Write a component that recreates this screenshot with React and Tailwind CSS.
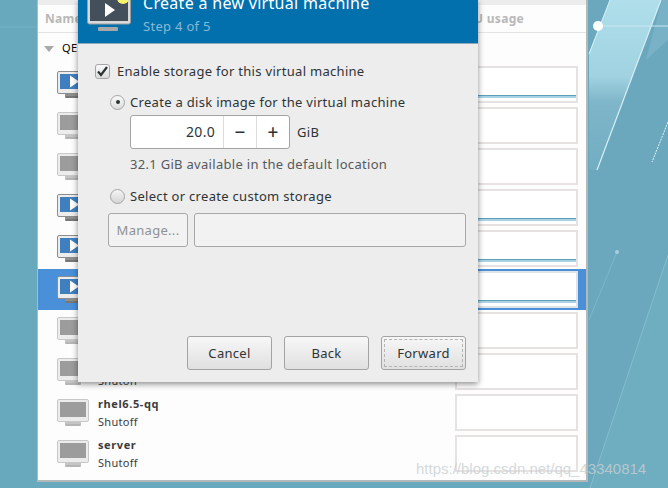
const font = { fontFamily: '"Noto Sans", sans-serif', letterSpacing: '0.3px' };

function Monitor({ on }) {
  return (
    <svg width="33" height="28" viewBox="0 0 33 28" className="shrink-0">
      <rect x="8" y="23" width="16" height="2.5" fill={on ? '#8f8f8f' : '#c4c4c4'} />
      <rect x="8" y="25" width="16" height="2" rx="1" fill={on ? '#777' : '#b5b5b5'} />
      <rect x="0.5" y="0.5" width="31" height="22" rx="1.5" fill="#ececec" stroke={on ? '#8d8d8d' : '#c8c8c8'} />
      <rect x="3" y="3" width="26" height="15" fill={on ? '#3f7fbf' : '#9c9c9c'} />
      {on && <polygon points="13,4.5 13,16.5 22,10.5" fill="#fff" />}
    </svg>
  );
}

const rows = [
  { on: true }, { on: false }, { on: false }, { on: true }, { on: true },
  { on: true, sel: true }, { on: false }, { on: false, status: 'Shutoff' },
  { on: false, name: 'rhel6.5-qq', status: 'Shutoff' },
  { on: false, name: 'server', status: 'Shutoff' },
];

function Row({ on, sel, name, status }) {
  return (
    <div className={`flex h-[41px] items-center ${sel ? 'bg-[#4a90d9]' : ''}`}>
      <div className="ml-[19px] w-[41px]"><Monitor on={on} /></div>
      <div className="flex w-[120px] flex-col text-[#3c3c3c]">
        {name && <span className="text-[11px] leading-[18px] font-bold tracking-[0.6px]">{name}</span>}
        {status && <span className={`text-[11px] leading-[17px] ${name ? '' : 'mt-[18px]'}`}>{status}</span>}
      </div>
      <div className={`relative ml-auto mr-[8px] h-[37px] w-[123px] border-2 bg-white ${sel ? 'border-[#dfe3e8]' : 'border-[#e6e2e2]'}`}>
        {on && <div className="absolute right-0 bottom-[3px] left-0 h-[3px] border-t border-[#5f9fb9] bg-[#a9d3e4]" />}
      </div>
    </div>
  );
}

function Btn({ children, focus }) {
  return (
    <div className="relative flex h-[34px] w-[85px] items-center justify-center rounded-[3px] border border-[#a3a3a3] bg-gradient-to-b from-[#f7f7f7] to-[#e0e0e0] text-[13px] text-[#2e3436]">
      {focus && <div className="absolute inset-[2px] border border-dashed border-[#b4b4b4]" />}
      {children}
    </div>
  );
}

export default function App() {
  return (
    <div style={font} className="relative h-[488px] w-[668px] overflow-hidden bg-[#69a9bd]">
      <svg width="668" height="488" className="absolute inset-0">
        <defs>
          <linearGradient id="glow" x1="0" y1="0" x2="0" y2="1">
            <stop offset="0" stopColor="#b0dfeb" />
            <stop offset="0.45" stopColor="#a0d2e1" />
            <stop offset="0.6" stopColor="#7fb6c9" />
            <stop offset="1" stopColor="#72adc2" />
          </linearGradient>
        </defs>
        <polygon points="588,0 668,0 668,488 588,488" fill="#6ba8be" />
        <polygon points="662,0 668,0 668,40 646,60" fill="#79b2c6" />
        <polygon points="589,53 610,0 661,0 597,170 589,170" fill="url(#glow)" />
        <line x1="589" y1="54" x2="610" y2="0" stroke="#d5f0f6" strokeWidth="1" />
        <line x1="661" y1="0" x2="597" y2="170" stroke="#d5f0f6" strokeWidth="1.2" />
        <line x1="598" y1="26" x2="668" y2="26" stroke="#c5e8f0" strokeWidth="1" />
        <line x1="668" y1="122" x2="652" y2="162" stroke="#e4f6fa" strokeWidth="1" strokeDasharray="2 1" />
        <polygon points="668,255 642,330 590,488 668,488" fill="#6fadc1" />
        <line x1="668" y1="255" x2="590" y2="488" stroke="#84bccd" strokeWidth="1" />
        <line x1="617" y1="252" x2="589" y2="320" stroke="#7db5c8" strokeWidth="1" />
        <circle cx="617" cy="252" r="2" fill="#a3cfdc" />
        <circle cx="598" cy="26" r="5" fill="#fff" />
        <line x1="0" y1="27" x2="38" y2="27" stroke="#77b1c3" strokeWidth="1" />
      </svg>

      <div className="absolute top-0 left-[37px] flex h-[482px] w-[551px] flex-col border-r-2 border-b-2 border-l border-[#b4b8b9] bg-[#fdfdfd]">
        <div className="h-[5px] bg-[#ececec]" />
        <div className="flex h-[28px] items-center justify-between border-b border-[#e4e4e4] pr-[62px] pl-[7px] text-[12px] font-bold text-[#b8b8b8]">
          <span>Name</span>
          <span>CPU usage</span>
        </div>
        <div className="flex h-[31px] items-center pl-[6px] text-[11px] text-black">
          <span className="mr-[8px] h-0 w-0 border-x-[5px] border-t-[6px] border-x-transparent border-t-[#a8a8a8]" />
          <span>QEMU/KVM</span>
        </div>
        {rows.map((r, i) => <Row key={i} {...r} />)}
      </div>

      <div className="absolute top-0 left-[78px] flex h-[382px] w-[400px] flex-col bg-[#ededed] shadow-[0_2px_6px_rgba(0,0,0,0.45)]">
        <div className="flex h-[44px] items-end border-b border-[#8fa9b8] bg-[#0270ac] pb-[8px] pl-[9px]">
          <svg width="45" height="32" viewBox="0 0 45 32" className="mr-[11px] mb-[3px] shrink-0 overflow-visible">
            <rect x="11" y="27" width="20" height="4" rx="1" fill="#a8a8a8" />
            <rect x="0.5" y="-8" width="43" height="32" rx="2" fill="#d9d9d9" stroke="#9e9e9e" />
            <rect x="3" y="-6" width="38" height="27" fill="#43505c" />
            <polygon points="18,3 18,17 28,10" fill="#fff" />
            <circle cx="36" cy="-2" r="6" fill="#f6f36b" />
          </svg>
          <div className="flex flex-col">
            <span className="text-[16px] leading-[20px] text-white">Create a new virtual machine</span>
            <span className="mt-[4px] text-[13px] leading-[18px] text-[#86b9d8]">Step 4 of 5</span>
          </div>
        </div>

        <div className="flex flex-1 flex-col text-[13px] leading-[18px] text-[#2e3436]">
          <div className="mt-[18px] ml-[17px] flex items-center gap-[7px]">
            <span className="relative h-[15px] w-[15px] rounded-[3px] border border-[#a5a5a5] bg-gradient-to-b from-[#fafafa] to-[#dcdcdc]">
              <svg width="15" height="15" viewBox="0 0 15 15" className="absolute -top-px -left-px">
                <path d="M3 7.5 L6 11 L12 3" fill="none" stroke="#2e3436" strokeWidth="2.2" />
              </svg>
            </span>
            <span>Enable storage for this virtual machine</span>
          </div>

          <div className="mt-[13px] ml-[32px] flex items-center gap-[5px]">
            <span className="flex h-[15px] w-[15px] items-center justify-center rounded-full border border-[#a5a5a5] bg-gradient-to-b from-[#fafafa] to-[#dcdcdc]">
              <span className="h-[4px] w-[4px] rounded-full bg-[#2e3436]" />
            </span>
            <span>Create a disk image for the virtual machine</span>
          </div>

          <div className="mt-[4px] ml-[52px] flex items-center">
            <div className="flex h-[34px] w-[160px] rounded-[3px] border border-[#a3a3a3] bg-white">
              <span className="flex flex-1 items-center justify-end pr-[8px] text-[14px]">20.0</span>
              <span className="flex w-[33px] items-center justify-center border-l border-[#dcdcdc] text-[19px] font-medium">−</span>
              <span className="flex w-[33px] items-center justify-center border-l border-[#dcdcdc] text-[19px] font-medium">+</span>
            </div>
            <span className="ml-[7px]">GiB</span>
          </div>

          <div className="mt-[6px] ml-[52px] text-[#555a5c]">32.1 GiB available in the default location</div>

          <div className="mt-[14px] ml-[32px] flex items-center gap-[5px]">
            <span className="h-[15px] w-[15px] rounded-full border border-[#a5a5a5] bg-gradient-to-b from-[#f5f5f5] to-[#d5d5d5]" />
            <span>Select or create custom storage</span>
          </div>

          <div className="mt-[8px] ml-[30px] flex gap-[6px]">
            <div className="flex h-[34px] w-[80px] items-center justify-center rounded-[3px] border border-[#a8a8a8] bg-[#f2f2f2] text-[#8f9191]">Manage...</div>
            <div className="h-[34px] w-[272px] rounded-[3px] border border-[#a8a8a8] bg-[#f2f2f2]" />
          </div>

          <div className="mt-auto mr-[12px] mb-[12px] flex justify-end gap-[12px]">
            <Btn>Cancel</Btn>
            <Btn>Back</Btn>
            <Btn focus>Forward</Btn>
          </div>
        </div>
      </div>

      <span className="absolute top-[460px] left-[416px] text-[15px] leading-[18px] tracking-normal text-[#c9cfd1]/80" style={{ fontFamily: '"Liberation Sans", sans-serif' }}>https://blog.csdn.net/qq_43340814</span>
    </div>
  );
}
